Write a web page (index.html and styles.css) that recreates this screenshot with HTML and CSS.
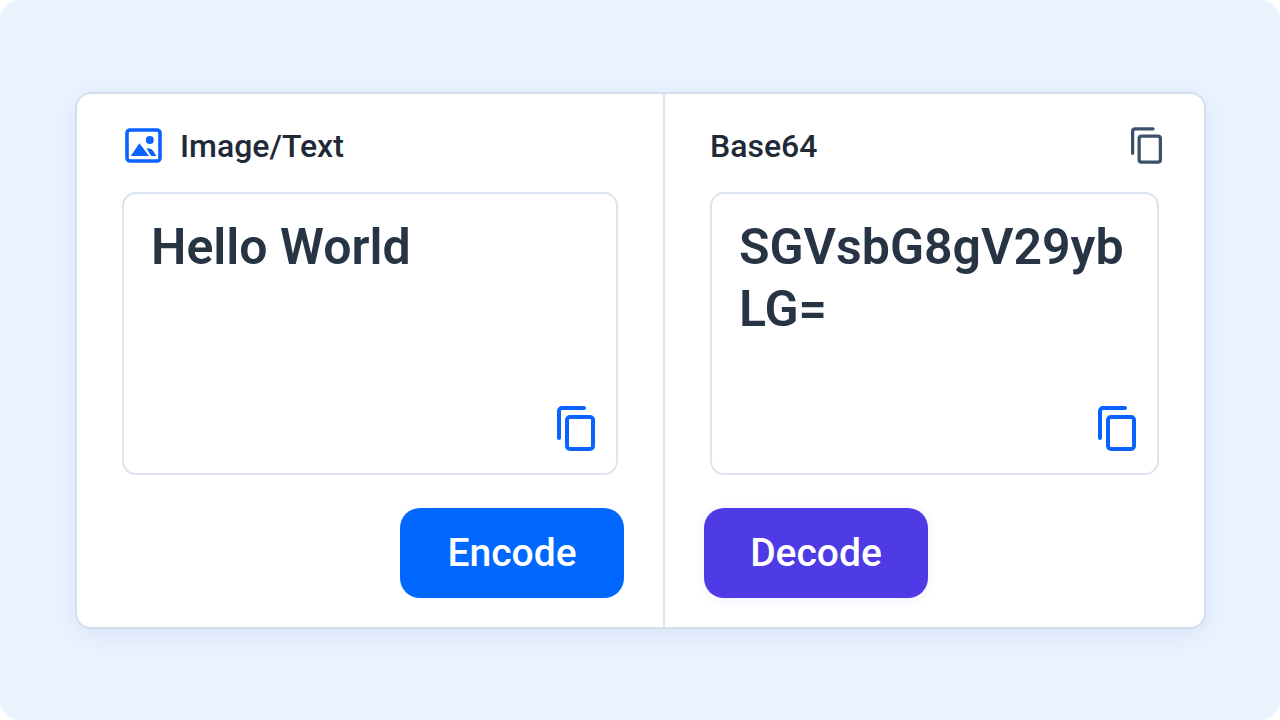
FILE: index.html
```html
<!DOCTYPE html>
<html lang="en">
<head>
  <meta charset="UTF-8" />
  <meta name="viewport" content="width=device-width, initial-scale=1" />
  <title>Base64 Encoder / Decoder</title>
  <link rel="stylesheet" href="styles.css">
</head>
<body>
  <main class="page">
    <div class="converter">
      <section class="pane pane-source">
        <div class="pane-header">
          <svg class="image-icon" viewBox="0 0 37 35" aria-hidden="true">
            <rect x="2" y="2" width="33" height="31" rx="3" fill="none" stroke="currentColor" stroke-width="3.6" />
            <circle cx="24.8" cy="12" r="4" fill="currentColor" />
            <path d="M5.8 28 14.4 15.2 24 28Z" fill="currentColor" />
            <path d="M21.3 20.3C24.5 20.3 27 21 28 22.8L31.4 28H26.2Z" fill="currentColor" />
          </svg>
          <label class="pane-title" for="sourceText">Image/Text</label>
        </div>
        <div class="field">
          <textarea id="sourceText" spellcheck="false">Hello World</textarea>
          <button type="button" class="copy-btn field-copy" aria-label="Copy text" data-target="sourceText">
            <svg class="copy-icon" viewBox="0 0 38 45">
              <path d="M2 32V5a3 3 0 0 1 3-3h22" />
              <rect x="10" y="11" width="26" height="32" rx="3" />
            </svg>
          </button>
        </div>
        <button type="button" class="action encode" id="encodeBtn">Encode</button>
      </section>

      <section class="pane pane-result">
        <div class="pane-header">
          <label class="pane-title" for="base64Text">Base64</label>
          <button type="button" class="copy-btn header-copy" aria-label="Copy Base64" data-target="base64Text">
            <svg class="copy-icon" viewBox="0 0 38 45">
              <path d="M2 32V5a3 3 0 0 1 3-3h22" />
              <rect x="10" y="11" width="26" height="32" rx="3" />
            </svg>
          </button>
        </div>
        <div class="field">
          <textarea id="base64Text" spellcheck="false">SGVsbG8gV29ybLG=</textarea>
          <button type="button" class="copy-btn field-copy" aria-label="Copy result" data-target="base64Text">
            <svg class="copy-icon" viewBox="0 0 38 45">
              <path d="M2 32V5a3 3 0 0 1 3-3h22" />
              <rect x="10" y="11" width="26" height="32" rx="3" />
            </svg>
          </button>
        </div>
        <button type="button" class="action decode" id="decodeBtn">Decode</button>
      </section>
    </div>
  </main>

  <script>
    const sourceText = document.getElementById('sourceText');
    const base64Text = document.getElementById('base64Text');

    document.getElementById('encodeBtn').addEventListener('click', () => {
      const bytes = new TextEncoder().encode(sourceText.value);
      base64Text.value = btoa(String.fromCharCode(...bytes));
    });

    document.getElementById('decodeBtn').addEventListener('click', () => {
      try {
        const bytes = Uint8Array.from(atob(base64Text.value), c => c.charCodeAt(0));
        sourceText.value = new TextDecoder().decode(bytes);
      } catch (err) {
        alert('Invalid Base64 string.');
      }
    });

    document.querySelectorAll('.copy-btn').forEach(btn => {
      btn.addEventListener('click', () => {
        navigator.clipboard.writeText(document.getElementById(btn.dataset.target).value);
      });
    });
  </script>
</body>
</html>
```
FILE: styles.css
```css
* {
  box-sizing: border-box;
}

body {
  margin: 0;
  background-color: #fff;
  color: #1f2937;
  font-family: Roboto, Inter, sans-serif;
}

.page {
  min-height: 100vh;
  padding: 24px 74px 24px 75px;
  display: flex;
  align-items: center;
  background-color: #ebf3ff;
  border-radius: 20px;
}

.converter {
  flex: 1;
  display: grid;
  grid-template-columns: 588fr 539fr;
  background: #fff;
  border: 2px solid #d3deeb;
  border-radius: 16px;
  box-shadow: 0 6px 26px rgba(60, 100, 160, 0.11);
}

.pane {
  display: flex;
  flex-direction: column;
  min-width: 0;
  padding: 31px 39px 29px;
}

.pane-source {
  border-right: 2px solid #dbe4ef;
}

.pane-header {
  display: flex;
  align-items: center;
  height: 42px;
  padding: 0 3px 0 9px;
  margin-bottom: 25px;
}

.pane-result .pane-header {
  padding-left: 6px;
}

.image-icon {
  width: 37px;
  height: 35px;
  margin-right: 18px;
  color: #0a62ff;
}

.pane-title {
  font-size: 32px;
  font-weight: 500;
  line-height: 42px;
}

/* Text areas */
.field {
  position: relative;
  display: flex;
  margin: 0 6px 33px;
}

textarea {
  width: 100%;
  height: 283px;
  padding: 22px 27px;
  border: 2px solid #dbe4f0;
  border-radius: 14px;
  background: #fff;
  color: #273444;
  font-family: inherit;
  font-size: 50px;
  font-weight: 600;
  line-height: 62px;
  resize: none;
  overflow: hidden;
}

textarea:focus {
  outline: none;
  border-color: #0a62ff;
}

/* Copy buttons */
.copy-btn {
  padding: 0;
  border: none;
  background: none;
  color: #0a62ff;
  cursor: pointer;
}

.copy-icon {
  display: block;
  width: 38px;
  height: 45px;
  fill: none;
  stroke: currentColor;
  stroke-width: 4;
  stroke-linecap: round;
}

.field-copy {
  position: absolute;
  right: 23px;
  bottom: 24px;
}

.header-copy {
  margin-left: auto;
  color: #3b506b;
}

.header-copy .copy-icon {
  width: 31px;
  height: 37px;
}

/* Encode / Decode */
.action {
  width: 224px;
  height: 90px;
  border: none;
  border-radius: 20px;
  color: #fff;
  font-family: inherit;
  font-size: 39px;
  font-weight: 500;
  cursor: pointer;
}

.encode {
  align-self: flex-end;
  background-color: #0068ff;
}

.encode:hover {
  background-color: #005be0;
}

.decode {
  align-self: flex-start;
  background-color: #4e3be6;
  box-shadow: 0 2px 12px rgba(78, 59, 230, 0.08);
}

.decode:hover {
  background-color: #4331cf;
}
```
